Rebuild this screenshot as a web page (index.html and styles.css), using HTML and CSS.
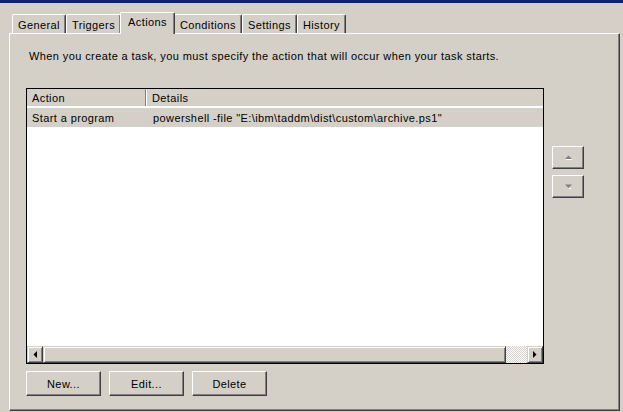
FILE: index.html
```html
<!DOCTYPE html>
<html>
<head>
<meta charset="utf-8">
<link rel="stylesheet" href="styles.css">
</head>
<body>
<div class="titlebar"></div>
<div class="dialog">
  <div class="tabs">
    <div class="tab">General</div>
    <div class="tab">Triggers</div>
    <div class="tab active">Actions</div>
    <div class="tab">Conditions</div>
    <div class="tab">Settings</div>
    <div class="tab">History</div>
  </div>
  <div class="panel">
    <p class="desc">When you create a task, you must specify the action that will occur when your task starts.</p>
    <div class="main">
      <div class="list">
        <div class="list-head">
          <div class="hcell c1">Action</div>
          <div class="hcell c2">Details</div>
        </div>
        <div class="list-row selected">
          <div class="cell c1">Start a program</div>
          <div class="cell c2">powershell -file "E:\ibm\taddm\dist\custom\archive.ps1"</div>
        </div>
        <div class="list-body"></div>
        <div class="hscroll">
          <div class="sbtn">
            <svg width="4" height="7" viewBox="0 0 4 7"><polygon points="4,0 4,7 0.5,3.5" fill="#000"/></svg>
          </div>
          <div class="thumb"></div>
          <div class="track"></div>
          <div class="sbtn">
            <svg width="4" height="7" viewBox="0 0 4 7"><polygon points="0,0 0,7 3.5,3.5" fill="#000"/></svg>
          </div>
        </div>
      </div>
      <div class="side">
        <button class="btn small">
          <svg width="7" height="5" viewBox="0 0 7 5"><polygon points="3.5,0.5 7,4 0,4" fill="#808080"/><line x1="1" y1="4.5" x2="7" y2="4.5" stroke="#fff" stroke-width="1"/></svg>
        </button>
        <button class="btn small">
          <svg width="7" height="5" viewBox="0 0 7 5"><polygon points="0,0.5 7,0.5 3.5,4" fill="#808080"/><line x1="4" y1="4.5" x2="6" y2="4.5" stroke="#fff" stroke-width="1"/></svg>
        </button>
      </div>
    </div>
    <div class="buttons">
      <button class="btn">New...</button>
      <button class="btn">Edit...</button>
      <button class="btn">Delete</button>
    </div>
  </div>
</div>
</body>
</html>
```

FILE: styles.css
```css
* { box-sizing: border-box; }
html, body {
  margin: 0;
  padding: 0;
  background: #d4d0c8;
  font-family: "Liberation Sans", Arial, sans-serif;
  font-size: 11px;
  letter-spacing: 0.4px;
  color: #000;
  width: 623px;
  height: 412px;
  overflow: hidden;
}
.titlebar {
  height: 3px;
  background: #0a246a;
}
.dialog {
  padding: 0 3px 0 9px;
}
.tabs {
  display: flex;
  align-items: flex-end;
  height: 30px;
  padding-left: 3px;
  position: relative;
  z-index: 1;
}
.tab {
  height: 19px;
  padding: 4px 5px 0 5px;
  line-height: 13px;
  border-top: 1px solid #fff;
  border-left: 1px solid #fff;
  border-right: 1px solid #404040;
  border-radius: 2px 2px 0 0;
  box-shadow: inset -1px 0 #808080;
  white-space: nowrap;
}
.tab.active {
  height: 22px;
  margin: 0 -1px -1px -1px;
  padding: 3px 7px 0 7px;
  background: #d4d0c8;
  position: relative;
  z-index: 2;
}
.panel {
  height: 378px;
  border-top: 1px solid #fff;
  border-left: 1px solid #fff;
  border-right: 1px solid #404040;
  border-bottom: 1px solid #404040;
  box-shadow: inset -1px -1px #808080;
  padding: 16px 0 0 16px;
}
.desc {
  margin: 0 0 0 3px;
  line-height: 13px;
  height: 13px;
  white-space: nowrap;
}
.main {
  display: flex;
  margin-top: 25px;
}
.list {
  width: 518px;
  height: 276px;
  border: 1px solid #000;
  background: #fff;
  display: flex;
  flex-direction: column;
}
.list-head {
  display: flex;
  height: 17px;
  background: #d4d0c8;
  flex: none;
}
.hcell {
  line-height: 18px;
  white-space: nowrap;
}
.hcell.c1 {
  width: 119px;
  padding-left: 5px;
  border-right: 1px solid #808080;
}
.hcell.c2 {
  flex: 1;
  padding-left: 5px;
  border-left: 1px solid #fff;
}
.list-row {
  display: flex;
  height: 19px;
  margin-top: 2px;
  flex: none;
}
.list-row.selected {
  background: #d4d0c8;
}
.cell {
  line-height: 20px;
  white-space: nowrap;
}
.cell.c1 {
  width: 120px;
  padding-left: 5px;
}
.cell.c2 {
  flex: 1;
  padding-left: 6px;
}
.list-body {
  flex: 1;
}
.hscroll {
  display: flex;
  height: 17px;
  flex: none;
}
.sbtn, .thumb {
  background: #d4d0c8;
  border-top: 1px solid #d4d0c8;
  border-left: 1px solid #d4d0c8;
  border-right: 1px solid #404040;
  border-bottom: 1px solid #404040;
  box-shadow: inset 1px 1px #fff, inset -1px -1px #808080;
}
.sbtn {
  width: 16px;
  display: flex;
  align-items: center;
  justify-content: center;
}
.thumb {
  width: 463px;
}
.track {
  flex: 1;
  background: repeating-conic-gradient(#fff 0 25%, #d4d0c8 0 50%) 0 0 / 2px 2px;
}
.side {
  display: flex;
  flex-direction: column;
  gap: 6px;
  margin-left: 8px;
  padding-top: 58px;
}
.btn {
  font: inherit;
  letter-spacing: inherit;
  color: #000;
  background: #d4d0c8;
  border-top: 1px solid #fff;
  border-left: 1px solid #fff;
  border-right: 1px solid #404040;
  border-bottom: 1px solid #404040;
  box-shadow: inset -1px -1px #808080;
  width: 75px;
  height: 25px;
  padding: 0;
  margin: 0;
  display: flex;
  align-items: center;
  justify-content: center;
}
.btn.small {
  width: 32px;
  height: 23px;
}
.buttons {
  display: flex;
  gap: 8px;
  margin-top: 7px;
}
```
